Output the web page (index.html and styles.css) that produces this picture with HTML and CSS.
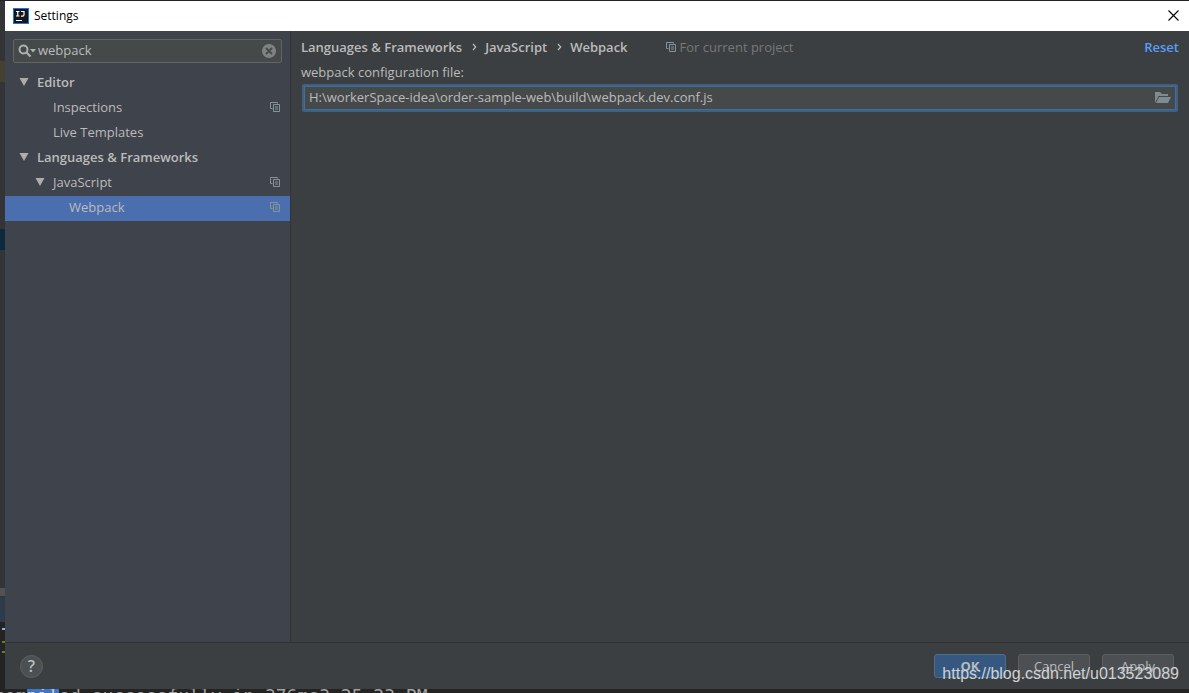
FILE: index.html
```html
<!DOCTYPE html>
<html lang="en">
<head>
<meta charset="utf-8">
<title>Settings</title>
<link rel="stylesheet" href="styles.css">
</head>
<body>
<svg class="defs" aria-hidden="true">
  <symbol id="copy" viewBox="0 0 10 10">
    <path d="M2.500 6.500h-2v-6h7v1M3.500 2.500h6v7h-6zM5 5h3M5 7h3" fill="none" stroke="currentColor"/>
  </symbol>
  <symbol id="arrow" viewBox="0 0 10 8"><path d="M0.500 0h9L5 8z" fill="currentColor"/></symbol>
  <symbol id="chevron" viewBox="0 0 5 8"><path d="M1 1l2.700 3L1 7" fill="none" stroke="currentColor" stroke-width="1.200"/></symbol>
</svg>
<div class="desktop">
  <div class="editor-edge" aria-hidden="true"><i class="mark olive"></i><i class="mark navy"></i><i class="mark gray"></i><i class="mark slate"></i><i class="console-edge"><i class="tick blue"></i><i class="tick green"></i><i class="tick green low"></i></i></div>
  <div class="window">
    <header class="titlebar">
      <svg class="logo" viewBox="0 0 16 16" aria-hidden="true">
        <rect width="16" height="16" fill="#1976e8"/><rect x="1" y="1" width="14" height="14" fill="#15171c"/>
        <path d="M3 3.500h3.500M4.750 3.500v4.500M3 8h3.500M8 3.500h3v3.300Q11 8.200 9.600 8.200H8M3 12.500h6" fill="none" stroke="#fff" stroke-width="1.200"/>
      </svg>
      <h1 class="title">Settings</h1>
      <button class="close" aria-label="Close"><svg viewBox="0 0 11 11" width="11" height="11"><path d="M.5.500l10 10M10.500.500l-10 10" stroke="#000" stroke-width="1.100"/></svg></button>
    </header>
    <div class="content">
      <aside class="sidebar">
        <div class="search">
          <svg class="lens" viewBox="0 0 18 14" aria-hidden="true"><circle cx="5.500" cy="5.500" r="4" fill="none" stroke="#afb1b3" stroke-width="2"/><path d="M8.500 8.500l4 4" stroke="#afb1b3" stroke-width="2.200"/><path d="M12 5h6l-3 3.500z" fill="#afb1b3"/></svg>
          <input class="search-input" type="text" value="webpack" aria-label="Search settings">
          <button class="clear" aria-label="Clear search"><svg viewBox="0 0 14 14" width="14" height="14"><circle cx="7" cy="7" r="7" fill="#7f8283"/><path d="M4 4l6 6M10 4l-6 6" stroke="#45494a" stroke-width="1.800"/></svg></button>
        </div>
        <ul class="tree">
          <li class="row strong"><svg class="arrow"><use href="#arrow"/></svg><span>Editor</span></li>
          <li class="row level-1"><span>Inspections</span><svg class="copy"><use href="#copy"/></svg></li>
          <li class="row level-1"><span>Live Templates</span></li>
          <li class="row strong"><svg class="arrow"><use href="#arrow"/></svg><span>Languages &amp; Frameworks</span></li>
          <li class="row nested"><svg class="arrow"><use href="#arrow"/></svg><span>JavaScript</span><svg class="copy"><use href="#copy"/></svg></li>
          <li class="row level-2 selected"><span>Webpack</span><svg class="copy"><use href="#copy"/></svg></li>
        </ul>
      </aside>
      <main class="panel">
        <div class="heading">
          <nav class="crumbs" aria-label="Breadcrumb"><span>Languages &amp; Frameworks</span><svg class="chevron"><use href="#chevron"/></svg><span>JavaScript</span><svg class="chevron"><use href="#chevron"/></svg><span>Webpack</span></nav>
          <span class="scope"><svg class="copy"><use href="#copy"/></svg>For current project</span>
          <a class="reset" href="#">Reset</a>
        </div>
        <label class="label" for="config">webpack configuration file:</label>
        <div class="field">
          <input class="field-input" id="config" type="text" value="H:\workerSpace-idea\order-sample-web\build\webpack.dev.conf.js">
          <button class="browse" aria-label="Browse"><svg viewBox="0 0 16 12" width="16" height="12"><path d="M0 11V0h5l2 2h6v2H3.500L0 11z" fill="#7f8b91"/><path d="M4 5h12l-3 6H1z" fill="#7f8b91"/></svg></button>
        </div>
      </main>
    </div>
    <footer class="footer">
      <button class="help" aria-label="Help">?</button>
      <div class="actions">
        <button class="button primary">OK</button>
        <button class="button">Cancel</button>
        <button class="button">Apply</button>
      </div>
    </footer>
  </div>
  <div class="console">co<span>m</span><mark>pil</mark>ed successfully in 376ms3:25:23 PM</div>
  <div class="watermark">https://blog.csdn.net/u013523089</div>
</div>
</body>
</html>
```

FILE: styles.css
```css
* { box-sizing: border-box; }
body {
  margin: 0;
  background: #232323;
  color: #bbbbbb;
  font-family: "Open Sans", "Noto Sans", sans-serif;
  font-size: 13px;
  line-height: 18px;
}
button, input { font: inherit; color: inherit; border: 0; padding: 0; margin: 0; background: none; outline: 0; }
button { display: flex; align-items: center; justify-content: center; }
.defs { position: absolute; width: 0; height: 0; }
.desktop {
  position: relative;
  height: 100vh;
  display: grid;
  grid-template-columns: 5px minmax(0, 1fr);
  grid-template-rows: minmax(0, 1fr) 4px;
  padding-top: 1px;
}
.editor-edge { display: flex; flex-direction: column; background: #333435; overflow: hidden; }
.mark { flex: none; }
.olive { height: 21px; margin-top: 60px; background: #444133; }
.navy { height: 21px; margin-top: 147px; background: #0d293e; }
.gray { height: 8px; margin-top: 338px; background: #515253; }
.slate { height: 24px; margin-top: 2px; background: #2d3b4d; }
.console-edge { flex: 1; background: #232323; }
.tick { display: block; width: 3px; height: 2px; margin: 6px 0 0 2px; }
.blue { background: #8db2cf; }
.green { margin-top: 11px; background: #61822b; }
.low { margin-top: 8px; }

.window { display: flex; flex-direction: column; background: #3c3f41; }
.titlebar { height: 30px; display: flex; align-items: center; background: #fff; color: #000; padding: 0 10px 1px 8px; }
.logo { width: 16px; height: 16px; margin-right: 5px; }
.title { margin: 0; font-size: 12px; font-weight: 400; flex: 1; }
.content { flex: 1; display: flex; min-height: 0; border-bottom: 1px solid #323232; }
.sidebar { flex: none; width: 286px; background: #3f434c; border-right: 1px solid #323335; padding-top: 8px; }
.search {
  display: flex; align-items: center; height: 24px; margin: 0 8px;
  padding: 0 5px 0 4px; border: 1px solid #646464; border-radius: 2px; background: #45494a;
}
.lens { flex: none; width: 18px; height: 14px; margin-right: 2px; }
.search-input { flex: 1; min-width: 0; padding-bottom: 2px; }
.tree { list-style: none; margin: 8px 0 0; padding: 0; }
.row { height: 25px; display: flex; align-items: center; padding: 0 10px 3px 14px; }
.row span { flex: 1; }
.strong { font-weight: 600; }
.nested { padding-left: 30px; }
.level-1 { padding-left: 48px; }
.level-2 { padding-left: 64px; }
.selected { background: #4b6eaf; }
.arrow { flex: none; width: 10px; height: 8px; margin-right: 8px; color: #adadad; }
.copy { flex: none; width: 10px; height: 10px; color: #87939a; }

.panel { flex: 1; min-width: 0; padding: 7px 10px; }
.heading { display: flex; align-items: center; }
.crumbs { display: flex; align-items: center; font-weight: 600; }
.chevron { width: 5px; height: 8px; margin: 0 8px 0 10px; }
.scope { display: flex; align-items: center; gap: 4px; margin-left: 38px; color: #777777; }
.reset { margin-left: auto; color: #589df6; font-weight: 600; text-decoration: none; }
.label { display: block; margin-top: 7px; }
.field {
  display: flex; align-items: center; height: 28px; margin: 3px 1px 0;
  border: 2px solid #3d6185; border-radius: 2px; background: #45494a;
  box-shadow: inset 0 0 0 1px #466d94; padding: 0 5px;
}
.field-input { flex: 1; min-width: 0; padding-bottom: 2px; }
.footer { height: 46px; display: flex; align-items: center; justify-content: space-between; padding: 0 15px; }
.help { width: 23px; height: 23px; border: 1px solid #5e6162; border-radius: 50%; background: #4c5052; font-size: 16px; font-weight: 600; }
.actions { display: flex; gap: 12px; }
.button { width: 72px; height: 24px; border: 1px solid #5e6060; border-radius: 3px; background: #4c5052; }
.primary { background: #365880; border-color: #4c708c; font-weight: 700; }
.console {
  grid-column: 1 / -1; overflow: hidden; white-space: pre; text-indent: -6px;
  background: #232323; color: #a0a0a0; font: 18px/14px "DejaVu Sans Mono", monospace;
}
.console mark { background: #3d76c2; color: #c3d6ee; }
.watermark {
  position: absolute; right: 10px; bottom: 10px; color: #d0d2d3;
  font: 16px/18px "Liberation Sans", Arial, sans-serif;
  pointer-events: none;
}
```
